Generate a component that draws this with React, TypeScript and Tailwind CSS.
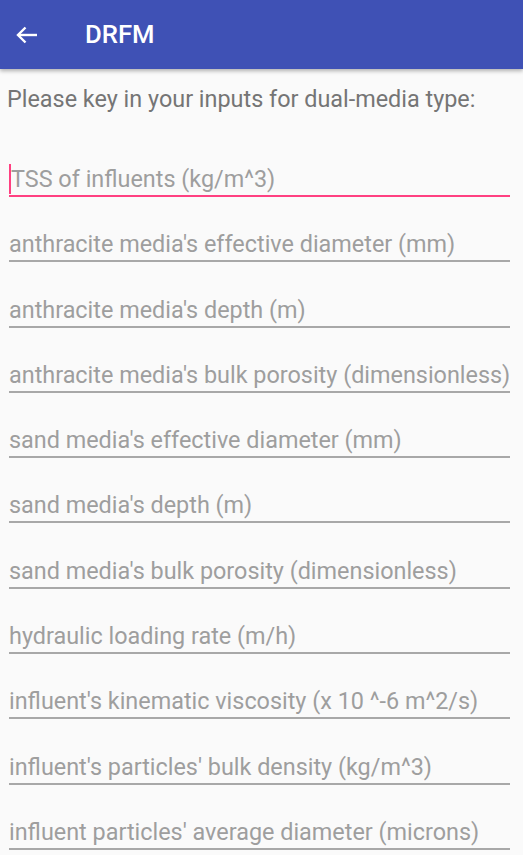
const fields = [
  "TSS of influents (kg/m^3)",
  "anthracite media's effective diameter (mm)",
  "anthracite media's depth (m)",
  "anthracite media's bulk porosity (dimensionless)",
  "sand media's effective diameter (mm)",
  "sand media's depth (m)",
  "sand media's bulk porosity (dimensionless)",
  "hydraulic loading rate (m/h)",
  "influent's kinematic viscosity (x 10 ^-6 m^2/s)",
  "influent's particles' bulk density (kg/m^3)",
  "influent particles' average diameter (microns)",
];

export default function App() {
  return (
    <div className="w-[523px] h-[855px] overflow-hidden bg-[#fafafa] font-['Roboto',sans-serif]">
      <header className="h-[69px] bg-[#3f51b5] flex items-center shadow-[0_2px_4px_rgba(0,0,0,0.3)] relative z-10">
        <svg className="ml-[15px] w-[24px] h-[24px]" viewBox="0 0 24 24" fill="none" stroke="white" strokeWidth="2.4">
          <path d="M22 12H3" />
          <path d="M10.5 4.5L3 12l7.5 7.5" />
        </svg>
        <h1 className="ml-[46px] text-white text-[25.7px] font-medium">DRFM</h1>
      </header>
      <p className="pt-[16px] pb-[17.7px] pl-[7px] text-[23.4px] leading-[29px] text-[#757575] whitespace-nowrap">
        Please key in your inputs for dual-media type:
      </p>
      <div className="pl-[9px] pr-[13px]">
        {fields.map((f, i) => (
          <div
            key={f}
            className={
              i === 0
                ? "h-[65.3px] flex items-end border-b-2 border-[#ff4081]"
                : "h-[65.3px] flex items-end border-b-2 border-[#a8a8a8]"
            }
          >
            <div className="mb-[1px] flex items-center h-[29px] text-[23.4px] leading-[29px] text-[#9e9e9e] whitespace-nowrap">
              {i === 0 && <span className="w-[2px] h-[30px] bg-[#ff4081]" />}
              {f}
            </div>
          </div>
        ))}
      </div>
    </div>
  );
}
